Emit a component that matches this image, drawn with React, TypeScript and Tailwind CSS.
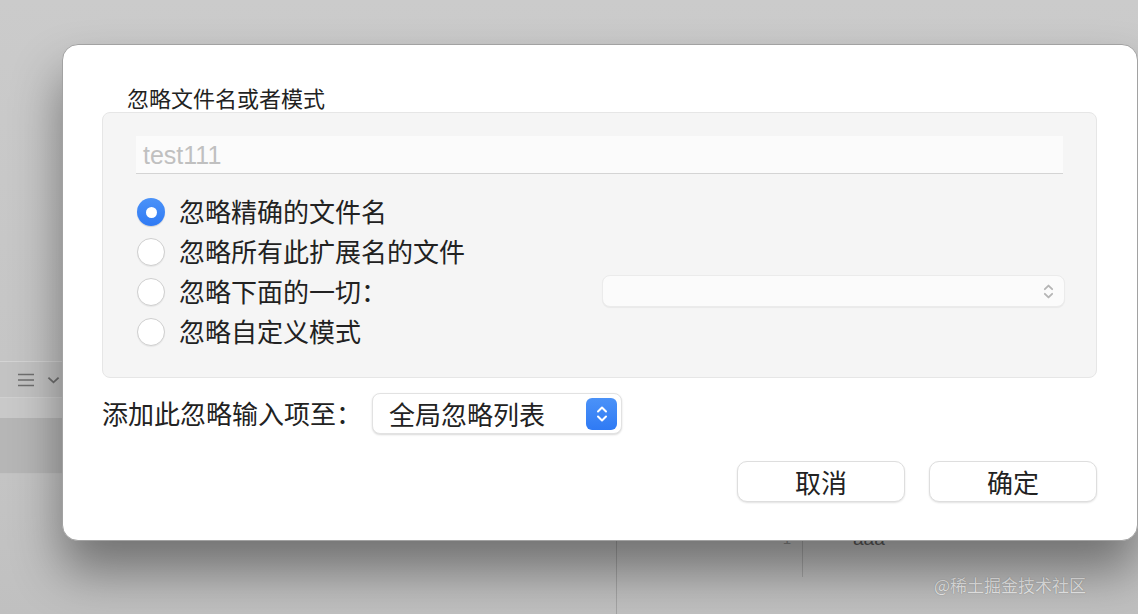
import React from "react";

const cjk = { fontFamily: '"Noto Sans CJK SC", "Noto Sans", sans-serif' };
const latin = { fontFamily: '"Liberation Sans", "Noto Sans CJK SC", sans-serif' };

const UpDown = ({ color, className }: { color: string; className?: string }) => (
  <svg viewBox="0 0 12 18" className={className} fill="none">
    <path d="M2 6.5 L6 2.5 L10 6.5" stroke={color} strokeWidth={2} strokeLinecap="round" strokeLinejoin="round" />
    <path d="M2 11.5 L6 15.5 L10 11.5" stroke={color} strokeWidth={2} strokeLinecap="round" strokeLinejoin="round" />
  </svg>
);

const Radio = ({ checked }: { checked?: boolean }) =>
  checked ? (
    <div className="w-[28px] h-[28px] rounded-full bg-gradient-to-b from-[#4b92f8] to-[#2f7af4] flex items-center justify-center shadow-[0_1px_1px_rgba(0,0,0,0.15)]">
      <div className="w-[11px] h-[11px] rounded-full bg-white" />
    </div>
  ) : (
    <div className="w-[28px] h-[28px] rounded-full bg-white border border-[#cfcfcf] shadow-[0_1px_1px_rgba(0,0,0,0.06)]" />
  );

const options = ["忽略精确的文件名", "忽略所有此扩展名的文件", "忽略下面的一切：", "忽略自定义模式"];

export default function App() {
  return (
    <div className="relative w-[1138px] h-[614px] overflow-hidden bg-[#c7c7c7]" style={cjk}>
      {/* window behind the sheet */}
      <div className="flex flex-col h-full">
        <div className="h-[362px] bg-gradient-to-b from-[#cbcbcb] to-[#c5c5c5] border-b border-[#d4d4d4]" />
        <div className="h-[36px] bg-[#c3c3c3] border-b border-[#d0d0d0] flex items-center pl-[17px] gap-[12px]">
          <svg viewBox="0 0 18 14" className="w-[18px] h-[14px]">
            <path d="M1 1.5 H17 M1 7 H17 M1 12.5 H17" stroke="#6f6f6f" strokeWidth={1.6} />
          </svg>
          <svg viewBox="0 0 14 8" className="w-[13px] h-[8px]">
            <path d="M1.5 1.5 L7 6.5 L12.5 1.5" stroke="#6f6f6f" strokeWidth={2} fill="none" />
          </svg>
        </div>
        <div className="h-[20px] bg-[#c9c9c9]" />
        <div className="h-[56px] bg-[#b6b6b6] border-b border-[#c2c2c2]" />
        <div className="flex-1 flex items-start bg-gradient-to-b from-[#c4c4c4] to-[#c0c0c0]">
          <div className="w-[617px] h-full border-r border-[#a4a4a4]" />
          <div className="w-[186px] h-[103px] border-r border-[#a6a6a6] flex justify-end pr-[11px] pt-[57px] text-[15px] text-[#8c8c8c]" style={latin}>
            <span className="leading-none">1</span>
          </div>
          <div className="pl-[50px] pt-[55px] text-[19px] font-medium text-[#5a5a5a] leading-none" style={latin}>
            aaa
          </div>
        </div>
      </div>

      {/* watermark */}
      <div className="absolute left-[934px] top-[572px] text-[17px] text-[#efefef] [text-shadow:0_0_1px_#7a7a7a]">
        @稀土掘金技术社区
      </div>

      {/* sheet */}
      <div className="absolute left-[62px] top-[44px] w-[1076px] h-[497px] rounded-[16px] bg-white border border-[#a2a2a2] shadow-[0_30px_50px_rgba(0,0,0,0.42)] flex flex-col pl-[39px] pr-[40px] pt-[39px] text-[#222]">
        <div className="ml-[25px] text-[22px] leading-[26px] mb-[2px]">忽略文件名或者模式</div>

        <div className="h-[266px] bg-[#f5f5f5] border border-[#e6e6e6] rounded-[8px] px-[33px] pt-[23px]">
          <div className="h-[38px] bg-[#fbfbfb] border-b border-[#d4d4d4] pl-[7px] text-[25px] leading-[38px] text-[#c0c0c0]" style={latin}>
            test111
          </div>
          <div className="mt-[17px] flex flex-col">
            {options.map((label, i) => (
              <div key={label} className="h-[40px] flex items-center">
                <div className="ml-[1px] mt-[2px]">
                  <Radio checked={i === 0} />
                </div>
                <span className="ml-[14px] text-[26px] leading-[40px]">{label}</span>
                {i === 2 && (
                  <div className="ml-auto mr-[-2px] w-[463px] h-[32px] rounded-[8px] bg-[#fbfbfb] border border-[#ebebeb] shadow-[0_1px_1px_rgba(0,0,0,0.05)] flex items-center justify-end pr-[10px]">
                    <UpDown color="#b5b5b5" className="w-[11px] h-[17px]" />
                  </div>
                )}
              </div>
            ))}
          </div>
        </div>

        <div className="mt-[15px] h-[41px] flex items-center">
          <span className="text-[26px] leading-[41px] -mt-[3px]">添加此忽略输入项至：</span>
          <div className="ml-[10px] w-[250px] h-[41px] rounded-[8px] bg-white border border-[#e2e2e2] shadow-[0_1px_2px_rgba(0,0,0,0.15)] flex items-center pl-[16px] pr-[4px]">
            <span className="text-[26px] leading-none">全局忽略列表</span>
            <div className="ml-auto w-[31px] h-[32px] rounded-[6px] bg-gradient-to-b from-[#4b92f8] to-[#2f7af4] flex items-center justify-center">
              <UpDown color="#ffffff" className="w-[12px] h-[18px]" />
            </div>
          </div>
        </div>

        <div className="mt-[27px] flex justify-end gap-[24px]">
          <button className="w-[168px] h-[41px] rounded-[10px] bg-white border border-[#dedede] shadow-[0_1px_2px_rgba(0,0,0,0.12)] text-[26px] leading-none text-[#222]">
            取消
          </button>
          <button className="w-[168px] h-[41px] rounded-[10px] bg-white border border-[#dedede] shadow-[0_1px_2px_rgba(0,0,0,0.12)] text-[26px] leading-none text-[#222]">
            确定
          </button>
        </div>
      </div>
    </div>
  );
}
